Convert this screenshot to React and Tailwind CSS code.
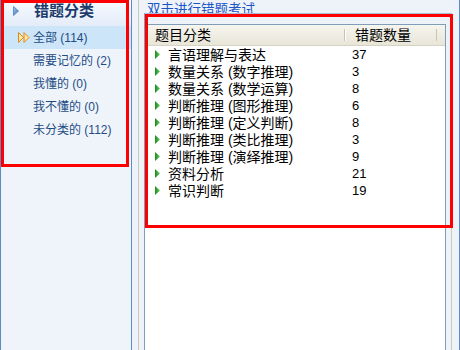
import React from 'react'

const font = { fontFamily: '"Liberation Sans", "Noto Sans CJK SC", sans-serif' }

const categories = [
    { name: '全部', count: 114, active: true },
    { name: '需要记忆的', count: 2 },
    { name: '我懂的', count: 0 },
    { name: '我不懂的', count: 0 },
    { name: '未分类的', count: 112 },
]

const rows = [
    ['言语理解与表达', 37],
    ['数量关系 (数字推理)', 3],
    ['数量关系 (数学运算)', 8],
    ['判断推理 (图形推理)', 6],
    ['判断推理 (定义判断)', 8],
    ['判断推理 (类比推理)', 3],
    ['判断推理 (演绎推理)', 9],
    ['资料分析', 21],
    ['常识判断', 19],
]

const BlueArrow = () => (
    <svg width="6" height="10" viewBox="0 0 6 10" className="ml-[12px] shrink-0">
        <defs>
            <linearGradient id="ba" x1="0" y1="0" x2="1" y2="1">
                <stop offset="0" stopColor="#a9c8ec" />
                <stop offset="1" stopColor="#3d74b9" />
            </linearGradient>
        </defs>
        <polygon points="0.5,0.5 5.5,5 0.5,9.5" fill="url(#ba)" stroke="#4a7fc0" strokeWidth="0.8" />
    </svg>
)

const OrangeArrows = () => (
    <svg width="12" height="11" viewBox="0 0 12 11" className="shrink-0">
        <polygon points="0.5,0.5 5.5,5.5 0.5,10.5" fill="#ffe7a8" stroke="#e08a10" strokeWidth="1" />
        <polygon points="6,0.5 11,5.5 6,10.5" fill="#ffe7a8" stroke="#e08a10" strokeWidth="1" />
    </svg>
)

const GreenArrow = () => (
    <svg width="5" height="9" viewBox="0 0 5 9" className="shrink-0">
        <defs>
            <linearGradient id="ga" x1="0" y1="0" x2="1" y2="0">
                <stop offset="0" stopColor="#1d8a1d" />
                <stop offset="1" stopColor="#5fd05f" />
            </linearGradient>
        </defs>
        <polygon points="0,0 5,4.5 0,9" fill="url(#ga)" />
    </svg>
)

const App = () => {
    return (
        <div className="relative w-[460px] h-[350px] overflow-hidden bg-[#eef3fa] flex" style={font}>
            {/* sidebar */}
            <div className="w-[132px] h-full border-l border-r border-[#5b8cc6] bg-[#eff4fb] flex flex-col">
                <div className="h-[26px] flex items-center pb-[4px] bg-gradient-to-b from-[#f7faff] to-[#e3ecf8]">
                    <BlueArrow />
                    <span className="ml-[15px] text-[15px] leading-[18px] font-bold text-[#1e3c6b]">错题分类</span>
                </div>
                {categories.map((c) => (
                    <div key={c.name} className={`h-[23px] flex items-center text-[12px] text-[#1e4c84] ${c.active ? 'bg-[#cde5f8]' : ''}`}>
                        <div className="w-[32px] flex justify-end pr-[3px]">
                            {c.active && <OrangeArrows />}
                        </div>
                        <span>{c.name} ({c.count})</span>
                    </div>
                ))}
            </div>

            {/* splitter */}
            <div className="w-[6px]" />
            <div className="w-px h-full bg-[#cbc9bd]" />
            <div className="w-[5px]" />

            {/* right area */}
            <div className="flex-1 flex flex-col border-r border-[#5b8cc6]">
                <div className="h-[13px] overflow-hidden pl-[3px] pt-[2px] text-[13.5px] leading-[15px] text-[#1b55c6] whitespace-nowrap">
                    双击进行错题考试
                </div>
                <div className="w-[308px] flex-1 flex flex-col border-l border-t border-r border-l-[#7f9db9] border-t-[#a7bcd4] border-r-[#c8c8c0] pt-[10px]">
                    <div className="w-[301px] flex-1 bg-white border-t border-r border-[#7f9db9]">
                        <div className="h-[21px] flex items-center bg-gradient-to-b from-[#f6f5ee] to-[#e8e6d8] border-b border-[#d6d3c2] text-[14px] text-black">
                            <div className="w-[199px] pl-[10px] leading-[16px]">题目分类</div>
                            <div className="w-px h-[12px] bg-[#c7c4b1] border-r border-white box-content" />
                            <div className="w-[90px] pl-[9px] leading-[16px]">错题数量</div>
                            <div className="w-px h-[12px] bg-[#c7c4b1]" />
                        </div>
                        {rows.map(([name, n]) => (
                            <div key={name} className="h-[17px] flex items-center text-[14px] text-black">
                                <div className="w-[200px] flex items-center pl-[10px]">
                                    <GreenArrow />
                                    <span className="ml-[8px] leading-[16px] whitespace-nowrap">{name}</span>
                                </div>
                                <span className="pl-[7px] text-[13px] leading-[16px]">{n}</span>
                            </div>
                        ))}
                    </div>
                </div>
            </div>

            {/* red annotation boxes */}
            <div className="absolute left-[1px] top-0 w-[128px] h-[167px] border-[3px] border-[#ff0000]" />
            <div className="absolute left-[145px] top-[14px] w-[308px] h-[214px] border-[3px] border-[#ff0000]" />
        </div>
    )
}

export default App
